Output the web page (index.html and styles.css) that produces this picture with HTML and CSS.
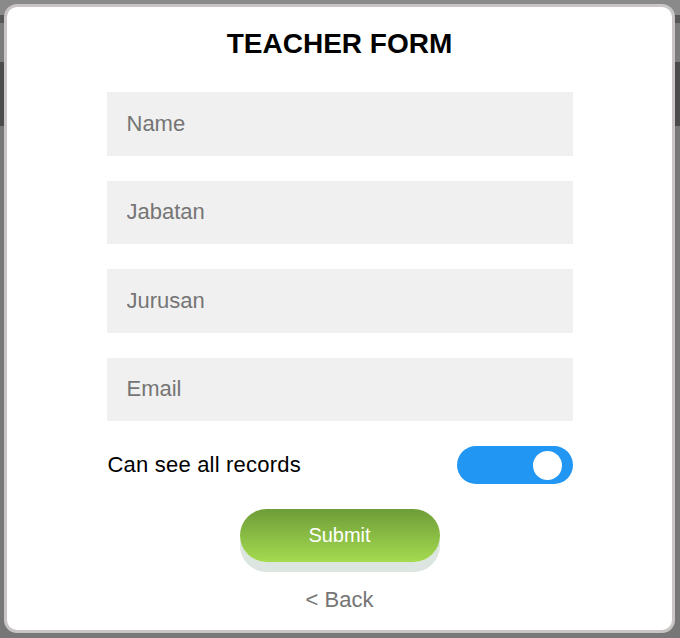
FILE: index.html
```html
<!DOCTYPE html>
<html lang="en">
<head>
<meta charset="utf-8">
<title>Teacher Form</title>
<link rel="stylesheet" href="styles.css">
</head>
<body>
<div class="modal">
  <h1 class="title">TEACHER FORM</h1>
  <form class="form">
    <input class="field" type="text" placeholder="Name">
    <input class="field" type="text" placeholder="Jabatan">
    <input class="field" type="text" placeholder="Jurusan">
    <input class="field" type="email" placeholder="Email">
    <div class="toggle-row">
      <span class="toggle-label">Can see all records</span>
      <span class="switch"><span class="knob"></span></span>
    </div>
    <div class="actions">
      <button class="submit" type="button">Submit</button>
    </div>
  </form>
  <a class="back" href="#">&lt; Back</a>
</div>
</body>
</html>
```
FILE: styles.css
```css
* { box-sizing: border-box; }
html, body { margin: 0; padding: 0; }
body {
  width: 680px;
  height: 638px;
  overflow: hidden;
  font-family: "Liberation Sans", Arial, sans-serif;
  background: linear-gradient(to bottom,
    #8a8a8a 0, #8a8a8a 15px,
    #575757 15px, #575757 23px,
    #7b7b7b 23px, #7b7b7b 62px,
    #4b4b4b 62px, #4b4b4b 126px,
    #777777 126px);
  padding: 4px 5px 5px 4px;
}
.modal {
  width: 671px;
  height: 629px;
  background: #ffffff;
  border: 3px solid #c9c5c5;
  border-radius: 13px;
  display: flex;
  flex-direction: column;
  align-items: center;
  padding-top: 21px;
}
.title {
  margin: 0;
  font-size: 28px;
  line-height: 32px;
  font-weight: bold;
  color: #000;
}
.form {
  width: 466px;
  margin-top: 32px;
  display: flex;
  flex-direction: column;
  gap: 25px;
}
.field {
  display: block;
  width: 100%;
  height: 63.5px;
  border: none;
  outline: none;
  background: #f0f0f0;
  padding: 0 20px;
  font-family: inherit;
  font-size: 22px;
  color: #333;
}
.field::placeholder { color: #757575; }
.toggle-row {
  display: flex;
  align-items: center;
  justify-content: space-between;
  height: 38px;
}
.toggle-label {
  font-size: 22px;
  letter-spacing: 0.2px;
  color: #000;
  padding-left: 1px;
}
.switch {
  width: 116px;
  height: 38px;
  border-radius: 19px;
  background: #2196f3;
  display: flex;
  align-items: center;
  justify-content: flex-end;
  padding-right: 11px;
}
.knob {
  width: 29px;
  height: 29px;
  border-radius: 50%;
  background: #fff;
}
.actions {
  display: flex;
  justify-content: center;
}
.submit {
  width: 200px;
  height: 53px;
  border: none;
  border-radius: 27px;
  background: linear-gradient(to bottom, #6e9c38, #a4db50);
  box-shadow: 0 10px 0 #dce5e0;
  color: #fff;
  font-family: inherit;
  font-size: 20px;
  cursor: pointer;
}
.back {
  margin-top: 25px;
  font-size: 22px;
  line-height: 25px;
  color: #757575;
  text-decoration: none;
}
```
